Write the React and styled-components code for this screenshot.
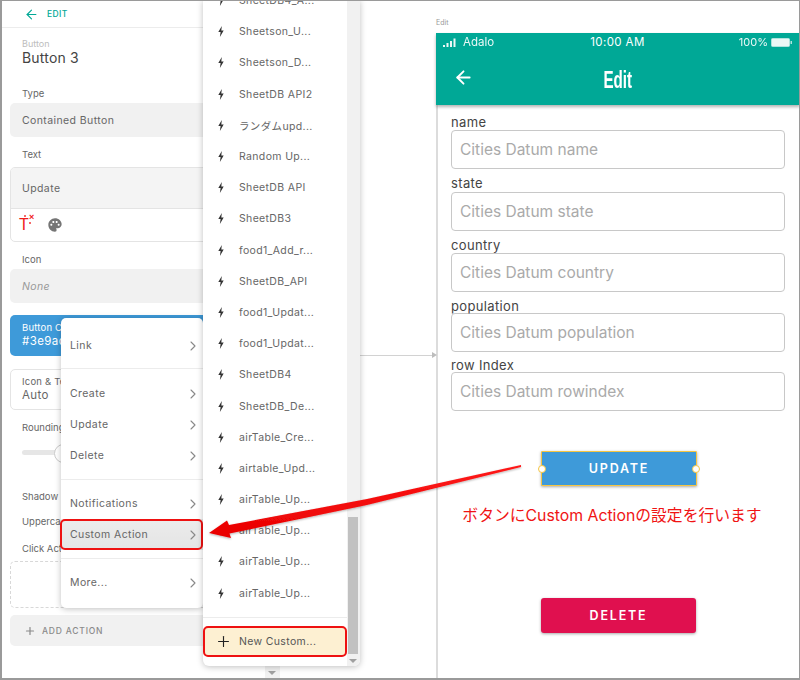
import React from "react";
import styled, { createGlobalStyle } from "styled-components";
import { ArrowLeft, ChevronRight, Plus } from "lucide-react";
import { MdPalette } from "react-icons/md";

const Global = createGlobalStyle`
  html, body { margin: 0; padding: 0; background: #fff; }
  * { box-sizing: border-box; }
`;

const Screen = styled.div`
  position: relative;
  width: 800px;
  height: 680px;
  overflow: hidden;
  display: flex;
  background: #fff;
  font-family: Inter, "Noto Sans CJK JP", sans-serif;
  color: #555;
  &::after {
    content: "";
    position: absolute;
    inset: 0;
    border: 1px solid #9a9a9a;
    border-left-width: 2px;
    border-bottom-width: 2px;
    pointer-events: none;
  }
`;

/* left properties panel */
const Sidebar = styled.aside`
  width: 280px;
  flex: none;
  display: flex;
  flex-direction: column;
  border-right: 1px solid #e6e6e6;
`;

const TopBar = styled.div`
  height: 28px;
  flex: none;
  padding: 1px 0 0 24px;
  display: flex;
  align-items: center;
  gap: 8px;
  border-bottom: 1px solid #ececec;
  color: #00a896;
  font-size: 8.5px;
  font-weight: 500;
  letter-spacing: 0.4px;
`;

const Panel = styled.div`
  flex: 1;
  padding: 0 10px;
  display: flex;
  flex-direction: column;
`;

const Overline = styled.div`
  margin: 10px 0 0 12px;
  font-size: 9px;
  line-height: 11px;
  color: #bdbdbd;
`;

const PanelTitle = styled.div`
  margin-left: 12px;
  font-size: 14px;
  line-height: 18px;
  letter-spacing: 0.2px;
  color: #444;
`;

const FieldLabel = styled.div`
  margin: ${(p) => p.$top}px 0 0 12px;
  height: 12px;
  font-size: 9.5px;
  line-height: 12px;
  color: #666;
  white-space: nowrap;
`;

const SelectField = styled.div`
  margin-top: 3px;
  height: 34px;
  padding-left: 12px;
  display: flex;
  align-items: center;
  background: #f1f1f1;
  border-radius: 5px;
  font-size: 10.5px;
  letter-spacing: 0.4px;
  font-style: ${(p) => (p.$empty ? "italic" : "normal")};
  color: ${(p) => (p.$empty ? "#999" : "#666")};
`;

const TextBox = styled.div`
  margin-top: 6px;
  height: 75px;
  border: 1px solid #e4e4e4;
  border-radius: 5px;
  overflow: hidden;
`;

const TextValue = styled.div`
  height: 41px;
  padding-left: 11px;
  display: flex;
  align-items: center;
  background: #f4f4f4;
  border-bottom: 1px solid #e4e4e4;
  font-size: 10.5px;
  letter-spacing: 0.4px;
  color: #666;
`;

const TextTools = styled.div`
  height: 32px;
  padding-left: 8px;
  display: flex;
  align-items: center;
  gap: 12px;
  color: #757575;
`;

const MagicT = styled.span`
  position: relative;
  width: 16px;
  color: #f01a1a;
  font-size: 16px;
  line-height: 20px;
  font-family: "Liberation Sans", sans-serif;
  &::before {
    content: "";
    position: absolute;
    left: 5px;
    top: 0;
    width: 2px;
    height: 2px;
    background: #f56a6a;
    box-shadow: 5px 7px 0 #f56a6a;
  }
  &::after {
    content: "×";
    position: absolute;
    top: -4px;
    left: 10px;
    font-size: 9px;
    line-height: 12px;
    font-weight: 700;
  }
`;

const ColorField = styled.div`
  margin-top: 12px;
  height: 41px;
  padding: 7px 0 0 12px;
  background: #3e9ad9;
  border-radius: 5px;
  color: #fff;
`;

const SmallCaption = styled.div`
  font-size: 9.5px;
  line-height: 12px;
  letter-spacing: 0.2px;
  color: ${(p) => p.$color || "inherit"};
`;

const CaptionValue = styled.div`
  font-size: 11.5px;
  line-height: 15px;
  letter-spacing: 0.4px;
  color: ${(p) => p.$color || "inherit"};
`;

const OutlineField = styled.div`
  margin-top: 13px;
  height: 41px;
  padding: 6px 0 0 11px;
  border: 1px solid #e4e4e4;
  border-radius: 5px;
`;

const SliderTrack = styled.div`
  position: relative;
  margin: 16px 0 0 12px;
  width: 120px;
  height: 5px;
  border-radius: 3px;
  background: #e6e6e6;
  &::after {
    content: "";
    position: absolute;
    left: 32px;
    top: -6px;
    width: 17px;
    height: 17px;
    border-radius: 50%;
    background: #fff;
    border: 1px solid #ccc;
  }
`;

const DropZone = styled.div`
  margin-top: 6px;
  height: 47px;
  border: 1px dashed #d8d8d8;
  border-radius: 5px;
`;

const AddAction = styled.div`
  margin-top: 7px;
  height: 31px;
  padding-left: 14px;
  display: flex;
  align-items: center;
  gap: 6px;
  background: #f1f1f1;
  border-radius: 5px;
  color: #8a8a8a;
  font-size: 8.5px;
  font-weight: 500;
  letter-spacing: 0.8px;
`;

/* action menu over the panel */
const ActionMenu = styled.div`
  position: absolute;
  left: 61px;
  top: 318px;
  width: 142px;
  height: 290px;
  padding-top: 12px;
  background: #fff;
  border-radius: 5px;
  box-shadow: 0 1px 6px rgba(0, 0, 0, 0.25);
`;

const MenuItem = styled.div`
  position: relative;
  height: 31px;
  padding: 0 2px 0 9px;
  display: flex;
  align-items: center;
  justify-content: space-between;
  font-size: 10.5px;
  letter-spacing: 0.4px;
  color: #666;
  background: ${(p) => (p.$active ? "linear-gradient(#ececec, #e4e4e4)" : "transparent")};
  ${(p) =>
    p.$active &&
    `
    &::after {
      content: "";
      position: absolute;
      inset: 0 0 0 -1px;
      border: 2px solid #ee1111;
      border-radius: 5px;
    }
  `}
`;

const MenuDivider = styled.div`
  height: 1px;
  margin: ${(p) => p.$before}px 0 ${(p) => p.$after}px;
  background: #ececec;
`;

/* custom action list */
const SubMenu = styled.div`
  position: absolute;
  left: 203px;
  top: 0;
  width: 157px;
  height: 666px;
  display: flex;
  background: #fff;
  border-radius: 0 0 6px 6px;
  box-shadow: 0 1px 6px rgba(0, 0, 0, 0.25);
  overflow: hidden;
`;

const SubBody = styled.div`
  width: 144px;
  flex: none;
  display: flex;
  flex-direction: column;
`;

const SubList = styled.div`
  flex: none;
  height: 633px;
  margin-top: -16px;
  padding-top: 1px;
  overflow: hidden;
`;

const SubItem = styled.div`
  height: 31.2px;
  padding-left: 15px;
  display: flex;
  align-items: center;
  gap: 15px;
  font-size: 10.5px;
  letter-spacing: 0.35px;
  color: #666;
  white-space: nowrap;
`;

const SubFooter = styled.div`
  border-top: 1px solid #ececec;
  padding-top: 8px;
`;

const NewCustom = styled.div`
  height: 31px;
  padding-left: 10px;
  display: flex;
  align-items: center;
  gap: 7px;
  background: #fdf0d2;
  border: 2px solid #ee1111;
  border-radius: 5px;
  font-size: 10.5px;
  letter-spacing: 0.35px;
  color: #555;
`;

const ScrollRail = styled.div`
  position: relative;
  flex: 1;
  background: #f1f1f1;
`;

const ScrollThumb = styled.div`
  position: absolute;
  left: 1px;
  right: 2px;
  top: 517px;
  height: 137px;
  background: #c1c1c1;
`;

const ScrollArrow = styled.div`
  position: absolute;
  left: ${(p) => p.$left}px;
  top: ${(p) => p.$top}px;
  border: 4px solid transparent;
  border-top: 4px solid #a0a0a0;
  border-bottom: 0;
`;

const PanelScroll = styled.div`
  position: absolute;
  left: 265px;
  top: 666px;
  width: 15px;
  height: 13px;
  background: #f1f1f1;
`;

/* canvas with the phone screen */
const Canvas = styled.main`
  flex: 1;
  padding: 18px 0 0 156px;
  min-width: 0;
`;

const Connector = styled.div`
  position: absolute;
  left: 360px;
  top: 355px;
  width: 72px;
  height: 1px;
  background: #d2d2d2;
  &::after {
    content: "";
    position: absolute;
    right: -5px;
    top: -3px;
    border-left: 5px solid #bdbdbd;
    border-top: 3.5px solid transparent;
    border-bottom: 3.5px solid transparent;
  }
`;

const ScreenName = styled.div`
  height: 15px;
  font-size: 7px;
  line-height: 9px;
  color: #999;
`;

const Phone = styled.div`
  width: 364px;
  height: 660px;
  border-left: 2px solid #dcdcdc;
`;

const AppHeader = styled.header`
  position: relative;
  height: 72px;
  margin-left: -2px;
  background: #00a896;
  color: #fff;
  box-shadow: 0 2px 3px rgba(0, 0, 0, 0.3);
`;

const StatusBar = styled.div`
  height: 18px;
  padding: 0 8px 0 7px;
  display: grid;
  grid-template-columns: 1fr auto 1fr;
  align-items: center;
  font-size: 11px;
`;

const Carrier = styled.div`
  display: flex;
  align-items: center;
  gap: 6px;
  font-size: 11.5px;
  opacity: 0.92;
`;

const Clock = styled.div`
  font-size: 11.5px;
  letter-spacing: 0.4px;
`;

const Battery = styled.div`
  display: flex;
  align-items: center;
  justify-content: flex-end;
  gap: 3px;
  opacity: 0.92;
`;

const NavBar = styled.div`
  position: relative;
  height: 54px;
  padding-top: 4px;
  display: flex;
  align-items: center;
  justify-content: center;
`;

const BackButton = styled.div`
  position: absolute;
  left: 17px;
  top: 16px;
  display: flex;
`;

const Title = styled.div`
  font-family: "Liberation Sans", sans-serif;
  font-weight: 700;
  font-size: 23px;
  line-height: 26px;
  transform: scaleX(0.66);
`;

const Form = styled.div`
  padding: 0 15px 0 13px;
`;

const InputGroup = styled.div`
  margin-top: ${(p) => p.$top}px;
`;

const InputLabel = styled.div`
  height: ${(p) => p.$h}px;
  font-size: 13px;
  line-height: 17px;
  letter-spacing: 0.35px;
  color: #444;
`;

const Input = styled.div`
  height: 39px;
  padding: 0 0 1px 8px;
  display: flex;
  align-items: center;
  background: #fff;
  border: 1px solid #c8c8c8;
  border-radius: 4px;
  font-size: 15.5px;
  color: #aaa;
`;

const ActionButton = styled.div`
  position: relative;
  width: ${(p) => p.$w}px;
  height: ${(p) => p.$h}px;
  margin: ${(p) => p.$top}px 0 0 90px;
  display: flex;
  align-items: center;
  justify-content: center;
  background: ${(p) => p.$bg};
  border-radius: ${(p) => (p.$selected ? 1 : 3)}px;
  border: ${(p) => (p.$selected ? "1px solid #f5c542" : "none")};
  box-shadow: 0 1px 3px rgba(0, 0, 0, 0.35);
  color: #fff;
  font-size: 12.5px;
  font-weight: 600;
  letter-spacing: 1.8px;
`;

const Handle = styled.span`
  position: absolute;
  top: 50%;
  ${(p) => p.$side}: -4px;
  width: 8px;
  height: 8px;
  margin-top: -4px;
  background: #fff;
  border: 1.5px solid #f5c542;
  border-radius: 50%;
`;

const Note = styled.div`
  margin: 20px 12px 0 0;
  text-align: center;
  font-size: 15.8px;
  line-height: 20px;
  color: #f01414;
  white-space: nowrap;
`;

const Pointer = styled.svg`
  position: absolute;
  left: 0;
  top: 0;
  pointer-events: none;
`;

const Bolt = () => (
  <svg width="6" height="11" viewBox="0 0 6 11" style={{ flex: "none" }}>
    <path d="M3.8 0 L0.3 6 H2.6 L1.9 11 L5.7 4.4 H3.3 Z" fill="#333" />
  </svg>
);

const customActions = [
  "SheetDB4_A...",
  "Sheetson_U...",
  "Sheetson_D...",
  "SheetDB API2",
  "ランダムupd...",
  "Random Up...",
  "SheetDB API",
  "SheetDB3",
  "food1_Add_r...",
  "SheetDB_API",
  "food1_Updat...",
  "food1_Updat...",
  "SheetDB4",
  "SheetDB_De...",
  "airTable_Cre...",
  "airtable_Upd...",
  "airTable_Up...",
  "airTable_Up...",
  "airTable_Up...",
  "airTable_Up...",
];

const fields = [
  { label: "name", text: "Cities Datum name", top: 9, h: 16 },
  { label: "state", text: "Cities Datum state", top: 6, h: 17 },
  { label: "country", text: "Cities Datum country", top: 6, h: 16 },
  { label: "population", text: "Cities Datum population", top: 6, h: 15 },
  { label: "row Index", text: "Cities Datum rowindex", top: 5, h: 15 },
];

const Menu = ({ children, active }) => (
  <MenuItem $active={active}>
    {children}
    <ChevronRight size={16} color="#888" strokeWidth={1.6} />
  </MenuItem>
);

const App = () => {
  return (
    <Screen>
      <Global />
      <Sidebar>
        <TopBar>
          <ArrowLeft size={15} strokeWidth={1.8} />
          EDIT
        </TopBar>
        <Panel>
          <Overline>Button</Overline>
          <PanelTitle>Button 3</PanelTitle>
          <FieldLabel $top={21}>Type</FieldLabel>
          <SelectField>Contained Button</SelectField>
          <FieldLabel $top={12}>Text</FieldLabel>
          <TextBox>
            <TextValue>Update</TextValue>
            <TextTools>
              <MagicT>T</MagicT>
              <MdPalette size={16} />
            </TextTools>
          </TextBox>
          <FieldLabel $top={12}>Icon</FieldLabel>
          <SelectField $empty>None</SelectField>
          <ColorField>
            <SmallCaption>Button Color</SmallCaption>
            <CaptionValue>#3e9ad9</CaptionValue>
          </ColorField>
          <OutlineField>
            <SmallCaption $color="#666">Icon &amp; Text Color</SmallCaption>
            <CaptionValue $color="#666">Auto</CaptionValue>
          </OutlineField>
          <FieldLabel $top={12}>Rounding</FieldLabel>
          <SliderTrack />
          <FieldLabel $top={36}>Shadow</FieldLabel>
          <FieldLabel $top={13}>Uppercase</FieldLabel>
          <FieldLabel $top={15}>Click Actions</FieldLabel>
          <DropZone />
          <AddAction>
            <Plus size={12} strokeWidth={2.4} />
            ADD ACTION
          </AddAction>
        </Panel>
      </Sidebar>

      <Canvas>
        <ScreenName>Edit</ScreenName>
        <Phone>
          <AppHeader>
            <StatusBar>
              <Carrier>
                <svg width="14" height="9" viewBox="0 0 14 9">
                  <path d="M0 7h2v2H0zM3.500 5h2v4h-2zM7 3h2v6H7zM10.500 0.500h2V9h-2z" fill="#fff" />
                </svg>
                Adalo
              </Carrier>
              <Clock>10:00 AM</Clock>
              <Battery>
                100%
                <svg width="21" height="9" viewBox="0 0 21 9">
                  <rect x="0.500" y="0.500" width="18" height="8" rx="1" fill="#fff" stroke="#bfe9e4" />
                  <rect x="19.500" y="3" width="1.500" height="3" fill="#bfe9e4" />
                </svg>
              </Battery>
            </StatusBar>
            <NavBar>
              <BackButton>
                <ArrowLeft size={21} strokeWidth={2.2} />
              </BackButton>
              <Title>Edit</Title>
            </NavBar>
          </AppHeader>
          <Form>
            {fields.map((f) => (
              <InputGroup key={f.label} $top={f.top}>
                <InputLabel $h={f.h}>{f.label}</InputLabel>
                <Input>{f.text}</Input>
              </InputGroup>
            ))}
            <ActionButton $w={156} $h={35} $top={40} $bg="#3e9ad9" $selected>
              UPDATE
              <Handle $side="left" />
              <Handle $side="right" />
            </ActionButton>
            <Note>ボタンにCustom Actionの設定を行います</Note>
            <ActionButton $w={155} $h={35} $top={72} $bg="#e0104f">
              DELETE
            </ActionButton>
          </Form>
        </Phone>
      </Canvas>

      <Connector />
      <PanelScroll>
        <ScrollArrow $left={3} $top={5} />
      </PanelScroll>

      <ActionMenu>
        <Menu>Link</Menu>
        <MenuDivider $before={7} $after={9} />
        <Menu>Create</Menu>
        <Menu>Update</Menu>
        <Menu>Delete</Menu>
        <MenuDivider $before={8} $after={8} />
        <Menu>Notifications</Menu>
        <Menu active>Custom Action</Menu>
        <MenuDivider $before={8} $after={8} />
        <Menu>More...</Menu>
      </ActionMenu>

      <SubMenu>
        <SubBody>
          <SubList>
            {customActions.map((name, i) => (
              <SubItem key={i}>
                <Bolt />
                {name}
              </SubItem>
            ))}
          </SubList>
          <SubFooter>
            <NewCustom>
              <Plus size={17} color="#222" strokeWidth={1.6} />
              New Custom...
            </NewCustom>
          </SubFooter>
        </SubBody>
        <ScrollRail>
          <ScrollThumb />
          <ScrollArrow $left={2} $top={659} />
        </ScrollRail>
      </SubMenu>

      <Pointer width="800" height="680" viewBox="0 0 800 680">
        <defs>
          <linearGradient id="arrowFill" x1="0" y1="0" x2="0" y2="1">
            <stop offset="0" stopColor="#ff1a1a" />
            <stop offset="1" stopColor="#e80000" />
          </linearGradient>
          <filter id="arrowShadow" x="-5%" y="-20%" width="110%" height="140%">
            <feDropShadow dx="0" dy="1" stdDeviation="1" floodColor="#000" floodOpacity="0.3" />
          </filter>
        </defs>
        <path
          d="M521 465 L367 499 L229 525 L227 520.5 L209 533 L231 538 L229.500 533.500 L367 505 L521 467 Z"
          fill="url(#arrowFill)"
          filter="url(#arrowShadow)"
        />
      </Pointer>
    </Screen>
  );
};

export default App;
